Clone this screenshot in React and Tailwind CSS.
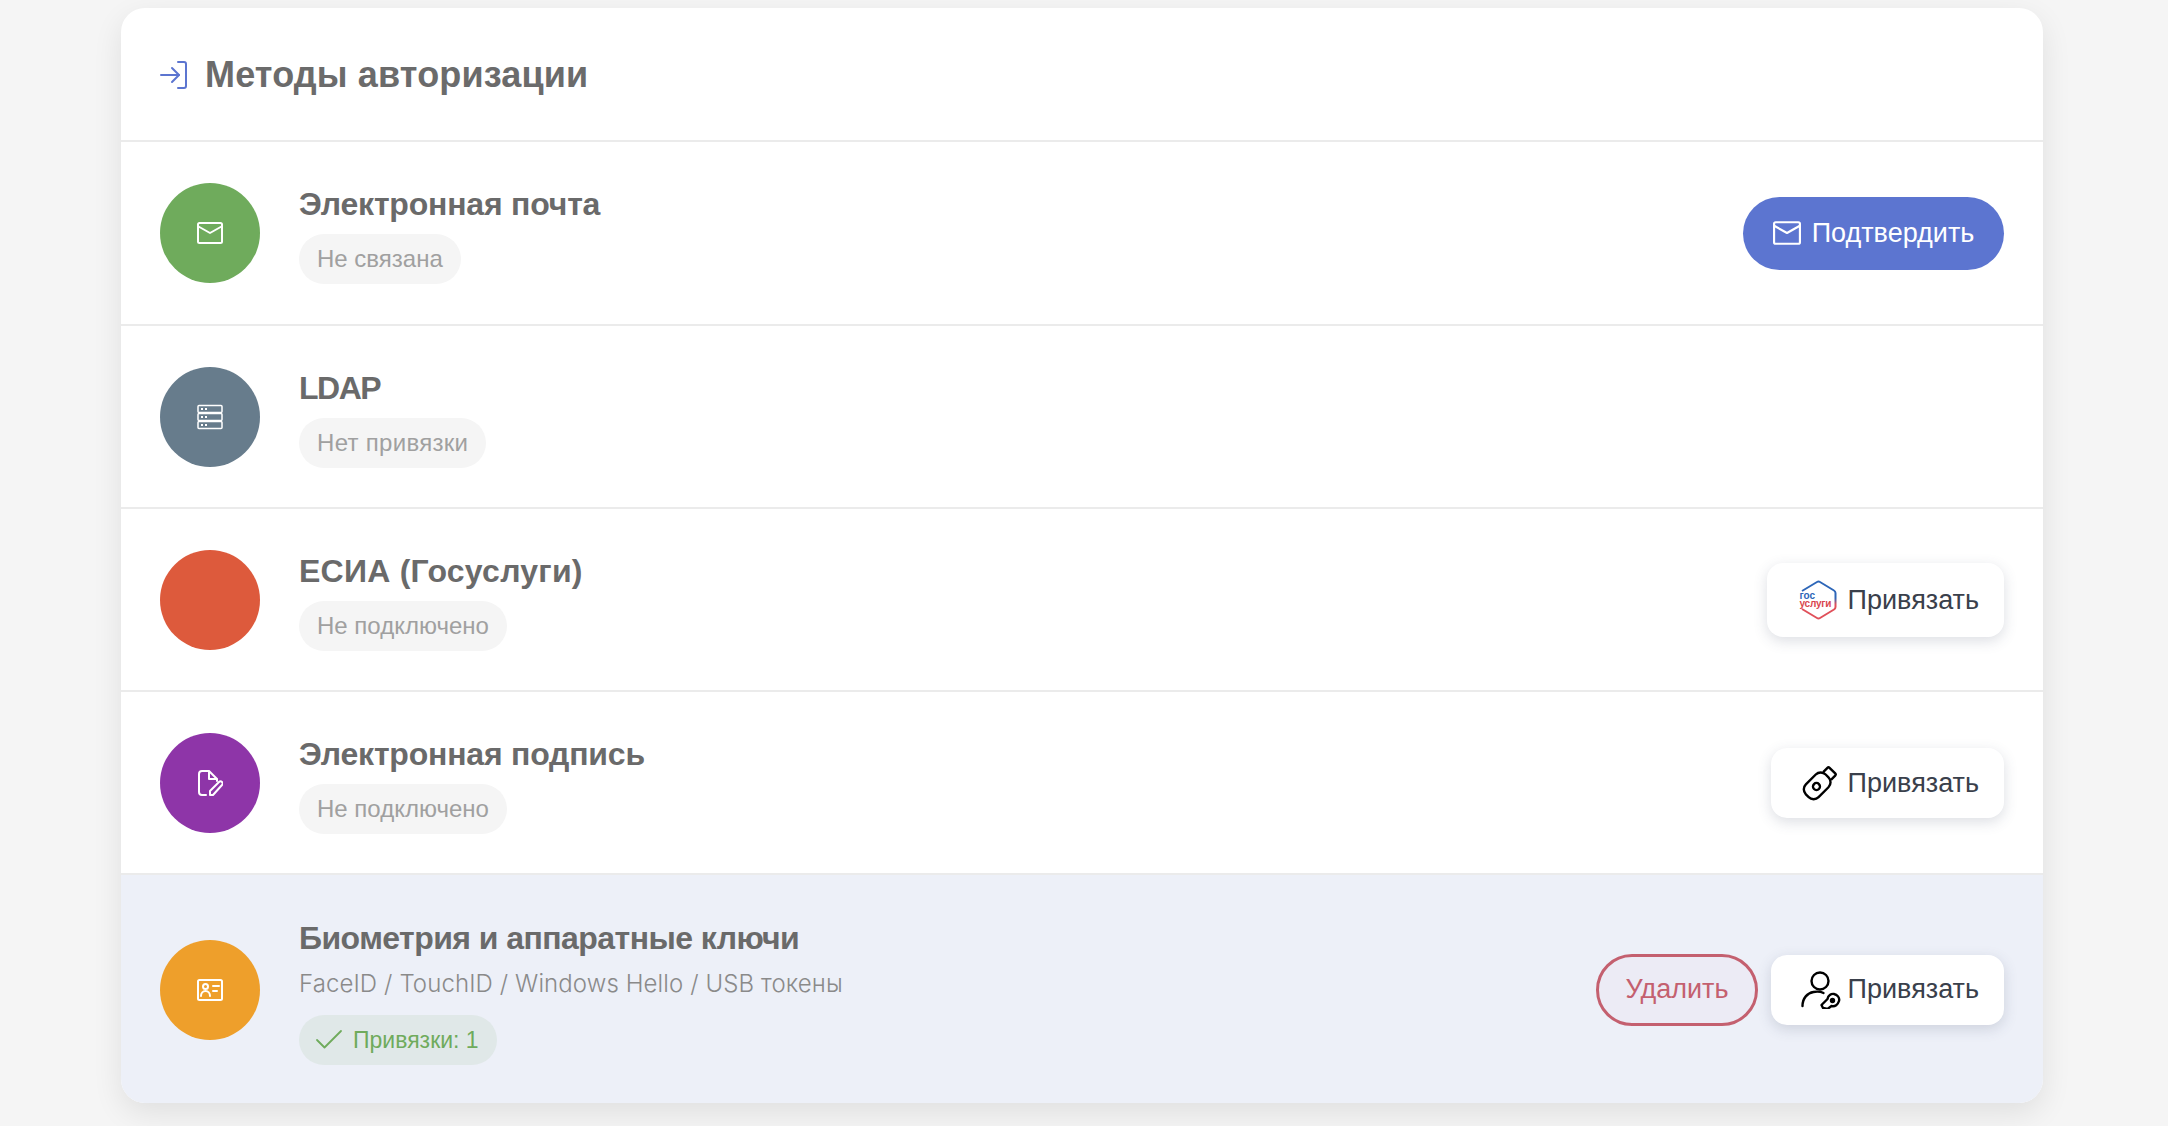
import React from "react";
import { Check } from "lucide-react";

const MailIcon = ({ className }) => (
  <svg viewBox="0 0 26 26" fill="none" stroke="currentColor" strokeWidth="2" strokeLinejoin="round" strokeLinecap="round" className={className}>
    <rect x="1" y="3" width="24" height="20" rx="1.5" />
    <path d="M1.5 6.5 13 13l11.5-6.5" />
  </svg>
);

const ServerIcon = ({ className }) => (
  <svg viewBox="0 0 26 26" fill="none" stroke="currentColor" strokeWidth="1.5" className={className}>
    <rect x="1" y="1.5" width="24" height="7" rx="1" />
    <rect x="1" y="9.5" width="24" height="7" rx="1" />
    <rect x="1" y="17.5" width="24" height="7" rx="1" />
    <path d="M4 5h2M8 5h2M4 13h2M8 13h2M4 21h2M8 21h2" strokeWidth="2" />
  </svg>
);

const SignIcon = ({ className }) => (
  <svg viewBox="0 0 26 26" fill="none" stroke="currentColor" strokeWidth="2" strokeLinejoin="round" strokeLinecap="round" className={className}>
    <path d="M9 25H5a3 3 0 0 1-3-3V4a3 3 0 0 1 3-3h7l8 8v2" />
    <path d="M12 1.5V9h7.5" />
    <path d="M13 25v-4l9-9a2 2 0 0 1 3 3l-9 10z" />
  </svg>
);

const CardIcon = ({ className }) => (
  <svg viewBox="0 0 26 22" fill="none" stroke="currentColor" strokeWidth="2" strokeLinecap="round" strokeLinejoin="round" className={className}>
    <rect x="1" y="1" width="24" height="20" rx="1.5" />
    <circle cx="8.5" cy="7.5" r="2.5" />
    <path d="M4 17c0-3 2-5 4.5-5s4.5 2 4.5 5" />
    <path d="M16 7h6M16 12h4" />
  </svg>
);

const LoginIcon = ({ className }) => (
  <svg viewBox="0 0 27 28" fill="none" stroke="currentColor" strokeWidth="2" strokeLinecap="round" strokeLinejoin="round" className={className}>
    <path d="M18 1h6a2 2 0 0 1 2 2v22a2 2 0 0 1-2 2h-6" />
    <path d="M1 14h18" />
    <path d="M12 7l7 7-7 7" />
  </svg>
);

const GosIcon = () => (
  <svg viewBox="0 0 38 40" className="w-[38px] h-[40px] shrink-0">
    <defs>
      <linearGradient id="gos" x1="0" y1="0" x2="0" y2="1">
        <stop offset="0" stopColor="#2d66b8" />
        <stop offset="0.45" stopColor="#2d66b8" />
        <stop offset="0.62" stopColor="#e0505a" />
        <stop offset="1" stopColor="#e0505a" />
      </linearGradient>
    </defs>
    <path d="M3 11 18 2a3 3 0 0 1 3 0l14 8.500a3 3 0 0 1 1.500 2.500v14a3 3 0 0 1-1.500 2.500L21 38a3 3 0 0 1-3 0L3 29" fill="none" stroke="url(#gos)" strokeWidth="2" strokeLinejoin="round" />
    <text x="0.500" y="19" fontSize="10" fontWeight="700" fill="#2d66b8" fontFamily="Liberation Sans, sans-serif">гос</text>
    <text x="0.500" y="27" fontSize="10" fontWeight="700" fill="#d9474f" fontFamily="Liberation Sans, sans-serif" textLength="32">услуги</text>
  </svg>
);

const UsbIcon = () => (
  <svg viewBox="0 0 36 36" fill="none" stroke="#000" strokeWidth="2.4" strokeLinejoin="round" className="w-[36px] h-[36px] shrink-0">
    <g transform="rotate(-45 18 18)">
      <rect x="0" y="9" width="28" height="18" rx="7" />
      <path d="M28 12.500h6a1.500 1.500 0 0 1 1.500 1.500v8a1.500 1.500 0 0 1-1.500 1.500h-6" />
      <circle cx="13" cy="18" r="3.500" />
    </g>
  </svg>
);

const UserKeyIcon = () => (
  <svg viewBox="0 0 40 38" fill="none" stroke="#000" strokeWidth="2.4" strokeLinecap="round" strokeLinejoin="round" className="w-[40px] h-[38px] shrink-0">
    <circle cx="19" cy="10" r="8.500" />
    <path d="M1.500 35c0-8 5-13 11-14 3-.5 7-.5 10 1" />
    <path d="M22 37l-1.500-3 6-6c.5-3.500 3.500-5.500 6.500-5s6 3.500 5 7-4 6-7.500 5l-4 3z" />
    <circle cx="31.500" cy="29.500" r="1.500" fill="#000" />
  </svg>
);

const BindButton = ({ icon, className }) => (
  <button className={`flex items-center justify-end pr-[25px] rounded-[16px] bg-white shadow-[0_4px_14px_rgba(60,70,100,0.18)] text-[#3a404b] text-[27px] ${className}`}>
    {icon}
    <span>Привязать</span>
  </button>
);

const Chip = ({ children, className }) => (
  <span className={`flex items-center h-[50px] rounded-full px-[18px] ${className}`}>
    {children}
  </span>
);

const Row = ({ color, icon, title, titleClass, status, action }) => (
  <div className="flex items-center border-t-2 border-[#ebebeb] pl-[39px] pr-[39px] pt-[40px] pb-[39px]">
    <div className={`flex items-center justify-center w-[100px] h-[100px] rounded-full shrink-0 text-white ${color}`}>
      {icon}
    </div>
    <div className="ml-[39px] flex flex-col items-start">
      <h3 className={`text-[32px] leading-[44px] font-bold text-[#6a6a6a] ${titleClass}`}>{title}</h3>
      <div className="mt-[8px]">
        <Chip className="bg-[#f5f5f5] text-[#a0a0a0] text-[24px]">{status}</Chip>
      </div>
    </div>
    <div className="ml-auto">{action}</div>
  </div>
);

export default function App() {
  return (
    <div className="min-h-[1126px] bg-[#f5f5f5] pt-[8px] font-['Liberation_Sans',sans-serif]">
      <div className="ml-[121px] w-[1922px] rounded-[24px] bg-white shadow-[0_10px_30px_rgba(0,0,0,0.09)] overflow-hidden">
        <div className="flex items-center h-[132px] pl-[39px] pt-[2px]">
          <LoginIcon className="w-[27px] h-[28px] text-[#5c75d0]" />
          <h2 className="ml-[18px] text-[36px] tracking-[0.15px] font-bold text-[#6b6b6b]">Методы авторизации</h2>
        </div>

        <div className="pb-[1px]">
          <Row
            color="bg-[#6fab5c]"
            icon={<MailIcon className="w-[26px] h-[26px]" />}
            title="Электронная почта"
            titleClass="tracking-[-0.2px]"
            status="Не связана"
            action={
              <button className="flex items-center justify-center gap-[11px] w-[261px] h-[73px] rounded-full bg-[#5c75d0] text-white text-[27px]">
                <MailIcon className="w-[28px] h-[28px]" />
                <span>Подтвердить</span>
              </button>
            }
          />
        </div>
        <Row
          color="bg-[#677c8c]"
          icon={<ServerIcon className="w-[26px] h-[26px]" />}
          title="LDAP"
          titleClass="tracking-[-1.5px]"
          status={<span className="tracking-[0.3px]">Нет привязки</span>}
        />
        <Row
          color="bg-[#dd5a3c]"
          title="ЕСИА (Госуслуги)"
          titleClass="tracking-[0.25px]"
          status="Не подключено"
          action={<BindButton icon={<GosIcon />} className="gap-[11px] w-[237px] h-[74px]" />}
        />
        <Row
          color="bg-[#8e35a8]"
          icon={<SignIcon className="w-[26px] h-[26px]" />}
          title="Электронная подпись"
          titleClass="tracking-[-0.2px]"
          status="Не подключено"
          action={<BindButton icon={<UsbIcon />} className="gap-[10px] w-[233px] h-[70px]" />}
        />

        {/* Active row, has one binding */}
        <div className="flex items-center border-t-2 border-[#ebebeb] bg-[#edf0f8] pl-[39px] pr-[39px] pt-[41px] pb-[38px]">
          <div className="flex items-center justify-center w-[100px] h-[100px] mb-[2px] rounded-full shrink-0 text-white bg-[#ee9f2b]">
            <CardIcon className="w-[26px] h-[22px]" />
          </div>
          <div className="ml-[39px] flex flex-col items-start">
            <h3 className="text-[32px] leading-[44px] font-bold tracking-[-0.55px] text-[#6a6a6a]">Биометрия и аппаратные ключи</h3>
            <p className="mt-[4px] text-[24px] tracking-[0.1px] leading-[40px] font-light text-[#8a8a8a] font-['Inter','Liberation_Sans',sans-serif]">FaceID / TouchID / Windows Hello / USB токены</p>
            <div className="mt-[11px]">
              <Chip className="bg-[#e0e8e8] text-[#6fab5c] text-[23px]">
                <Check className="w-[36px] h-[36px] -ml-[6px] mr-[6px]" strokeWidth={1.2} />
                Привязки: 1
              </Chip>
            </div>
          </div>
          <div className="ml-auto mb-[2px] flex items-center gap-[13px]">
            <button className="w-[162px] h-[72px] rounded-full border-[3px] border-[#c4606f] bg-[#ecebf5] text-[#c4606f] text-[27px]">
              Удалить
            </button>
            <BindButton icon={<UserKeyIcon />} className="gap-[7px] w-[233px] h-[70px]" />
          </div>
        </div>
      </div>
    </div>
  );
}
